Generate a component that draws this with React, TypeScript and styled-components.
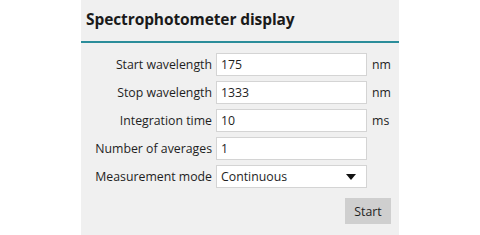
import React from "react";
import styled, { createGlobalStyle } from "styled-components";

const Global = createGlobalStyle`
  html, body { margin: 0; padding: 0; background: #ffffff; }
  body { font-family: "Open Sans", "Noto Sans", sans-serif; color: #1e1e1e; }
`;

const Page = styled.div`
  display: flex;
  padding-left: 81px;
`;

const Panel = styled.section`
  width: 318px;
  height: 235px;
  background: #f0f0f0;
  display: flex;
  flex-direction: column;
`;

const Header = styled.h1`
  margin: 0 0 10px 0;
  padding: 8px 0 0 5px;
  height: 43px;
  box-sizing: border-box;
  font-size: 15.5px;
  font-weight: 700;
  letter-spacing: -0.1px;
  color: #1a1a1a;
  border-bottom: 2px solid #2b8d9a;
`;

const Form = styled.div`
  display: grid;
  grid-template-columns: 1fr 151px 28px;
  column-gap: 4px;
  row-gap: 5px;
  align-items: center;
`;

const Label = styled.label`
  justify-self: end;
  font-size: 12.3px;
  color: #1e1e1e;
`;

const Field = styled.div`
  height: 23px;
  box-sizing: border-box;
  background: #ffffff;
  border: 1px solid #d4d4d4;
  display: flex;
  align-items: center;
  justify-content: space-between;
  padding: 0 4px;
  font-size: 12.3px;
  color: #1e1e1e;
`;

const Unit = styled.span`
  font-size: 12.3px;
  padding-left: 1px;
  color: #1e1e1e;
`;

const Arrow = styled.span`
  width: 0;
  height: 0;
  border-left: 5px solid transparent;
  border-right: 5px solid transparent;
  border-top: 6px solid #111;
  margin-right: 6px;
`;

const Actions = styled.div`
  display: flex;
  justify-content: flex-end;
  padding: 10px 8px 0 0;
`;

const Button = styled.button`
  width: 46px;
  height: 26px;
  border: none;
  background: #cfcfcf;
  font-family: inherit;
  font-size: 12.3px;
  color: #1e1e1e;
  padding: 0;
`;

const rows = [
  { label: "Start wavelength", value: "175", unit: "nm" },
  { label: "Stop wavelength", value: "1333", unit: "nm" },
  { label: "Integration time", value: "10", unit: "ms" },
  { label: "Number of averages", value: "1", unit: "" },
];

export default function App() {
  return (
    <>
      <Global />
      <Page>
        <Panel>
          <Header>Spectrophotometer display</Header>
          <Form>
            {rows.map((r) => (
              <React.Fragment key={r.label}>
                <Label>{r.label}</Label>
                <Field>{r.value}</Field>
                <Unit>{r.unit}</Unit>
              </React.Fragment>
            ))}
            <Label>Measurement mode</Label>
            <Field>
              Continuous
              <Arrow />
            </Field>
            <Unit />
          </Form>
          <Actions>
            <Button>Start</Button>
          </Actions>
        </Panel>
      </Page>
    </>
  );
}
